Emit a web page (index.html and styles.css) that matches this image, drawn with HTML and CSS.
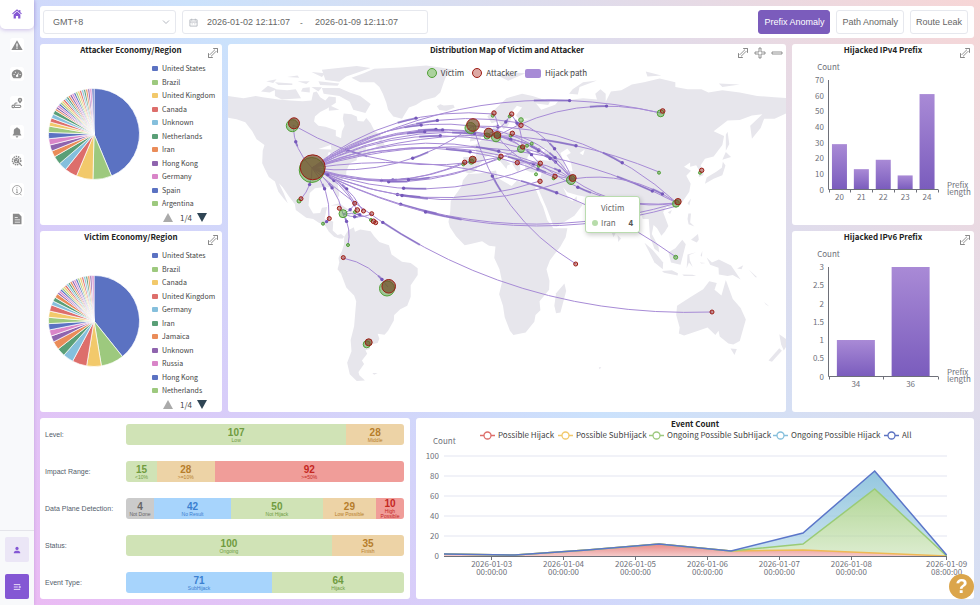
FILE: index.html
```html
<!DOCTYPE html>
<html lang="en">
<head>
    <meta charset="UTF-8">
    <meta name="viewport" content="width=device-width, initial-scale=1.0">
    <title>Prefix Anomaly Dashboard</title>
    <link rel="stylesheet" href="styles.css">
</head>
<body>
    <svg class="defs" aria-hidden="true">
        <symbol id="icon-expand" viewBox="0 0 12 12">
            <path d="M6.5 1.5h4v4l-1.300-1.300-5 5 1.300 1.300h-4v-4l1.300 1.300 5-5z"/>
            <path d="M1.500 6.500v4h4M6.500 1.500h4v4"/>
        </symbol>
    </svg>

    <nav class="sidebar">
        <a class="nav-item active" href="#" aria-label="Home"><svg viewBox="0 0 16 16"><path d="M8 1.500 1.500 7.300l1 1.100L8 3.600l5.500 4.800 1-1.100-2-1.800V2.500h-1.600v1.600z"/><path d="M3.500 8.700 8 4.800l4.500 3.900V14H9.500v-3.500h-3V14h-3z"/></svg></a>
        <a class="nav-item" href="#" aria-label="Alerts"><svg viewBox="0 0 16 16"><path fill-rule="evenodd" d="M8 1.500 15.500 14.500H.5zM7.100 6v4.300h1.800V6zm0 5.300v1.700h1.800v-1.700z"/></svg></a>
        <a class="nav-item" href="#" aria-label="Dashboard"><svg viewBox="0 0 16 16"><path fill-rule="evenodd" d="M8 2a6.500 6.500 0 0 0-5.500 10.500l1 1h9l1-1A6.500 6.500 0 0 0 8 2zM3.500 8h1.300v1.300H3.500zm1.700-3h1.300v1.300H5.200zM11.500 8h1.300v1.300h-1.300zM10.500 5.200 9.300 9.500a1.500 1.500 0 1 1-1.300-.5z"/></svg></a>
        <a class="nav-item" href="#" aria-label="Routes"><svg viewBox="0 0 16 16"><path fill-rule="evenodd" d="M12 1a3 3 0 0 1 3 3c0 1.500-2 3.600-3 4.500C11 7.600 9 5.500 9 4a3 3 0 0 1 3-3zm0 2a1 1 0 1 0 0 2 1 1 0 0 0 0-2z"/><path class="line" d="M8.500 8H6.500a1.500 1.500 0 0 0 0 3h5a1.500 1.500 0 0 1 0 3H5"/><circle class="line" cx="3" cy="12.500" r="1.700"/></svg></a>
        <a class="nav-item" href="#" aria-label="Notifications"><svg viewBox="0 0 16 16"><path d="M8 1.500a1 1 0 0 1 1 1c2 .5 3.300 2 3.300 4.200V10l1.400 2v.7H2.300V12l1.400-2V6.700C3.700 4.500 5 3 7 2.500a1 1 0 0 1 1-1zM6.300 13.500h3.400a1.700 1.700 0 0 1-3.400 0z"/></svg></a>
        <a class="nav-item" href="#" aria-label="Analysis"><svg viewBox="0 0 16 16"><circle class="line dashed" cx="7.500" cy="7.500" r="5.500"/><circle class="line" cx="7.500" cy="7.500" r="2.800"/><path class="line" d="m9.500 9.500 5 5M4 7.500h2l1-1.500 1.500 3 1-1.500"/></svg></a>
        <a class="nav-item" href="#" aria-label="Information"><svg viewBox="0 0 16 16"><circle class="line thin" cx="8" cy="8" r="6"/><path class="line thin" d="M7 7h1v4.300M6.800 11.300h2.500M8 4.300v1.300M11.500 13l2.500 1.500"/></svg></a>
        <a class="nav-item" href="#" aria-label="Reports"><svg viewBox="0 0 16 16"><path fill-rule="evenodd" d="M2.500 1h8L14 4.500V15H2.500zM5 5.500v1.300h4V5.500zm0 3v1.200h7V8.500zm0 3v1.200h7v-1.200z"/></svg></a>
        <div class="sidebar-bottom">
            <button class="side-btn" aria-label="Account"><svg viewBox="0 0 10 10"><circle cx="5" cy="3" r="2"/><path d="M1 9V8c0-1.500 2-2.200 4-2.200S9 6.500 9 8v1z"/></svg></button>
            <button class="side-btn primary" aria-label="Expand menu"><svg viewBox="0 0 10 10"><path class="line" d="M1 2h8M1 5h5M1 8h8M7 5h2.500M8 3.800 9.300 5 8 6.200"/></svg></button>
        </div>
    </nav>

    <main class="page">
        <header class="panel topbar">
            <label class="select-box">
                <select aria-label="Time zone"><option>GMT+8</option><option>GMT+0</option></select>
                <svg viewBox="0 0 8 8"><path d="M1 2.500l3 3 3-3"/></svg>
            </label>
            <div class="date-range">
                <svg viewBox="0 0 10 10"><path d="M1 2h8v7H1zM1 4.500h8M3 .8v2M7 .8v2M3 6.500h1M6 6.500h1"/></svg>
                <input type="text" aria-label="Start time" value="2026-01-02 12:11:07">
                <span>-</span>
                <input type="text" aria-label="End time" value="2026-01-09 12:11:07">
            </div>
            <div class="tabs">
                <button class="tab selected">Prefix Anomaly</button>
                <button class="tab">Path Anomaly</button>
                <button class="tab">Route Leak</button>
            </div>
        </header>

        <section class="panel pie-panel attacker">
            <h2>Attacker Economy/Region</h2>
            <button class="tool expand" aria-label="Expand"><svg><use href="#icon-expand"/></svg></button>
            <div class="pie-body">
                <svg class="pie" id="attackerPie" viewBox="0 0 94 94"></svg>
                <div class="legend">
                    <ul id="attackerLegend"></ul>
                    <div class="pager"><button class="prev" aria-label="Previous"></button><span>1/4</span><button class="next" aria-label="Next"></button></div>
                </div>
            </div>
        </section>

        <section class="panel map-panel">
            <h2>Distribution Map of Victim and Attacker</h2>
            <svg class="map" id="map" viewBox="228 44 558 368" preserveAspectRatio="xMidYMid slice">
                <g id="land" transform="matrix(1.741 0 0 -2.280 478.600 255.600)"></g>
                <g id="paths"></g>
                <g id="nodes"></g>
            </svg>
            <ul class="map-legend">
                <li><i class="dot victim"></i>Victim</li>
                <li><i class="dot attacker-dot"></i>Attacker</li>
                <li><i class="bar"></i>Hijack path</li>
            </ul>
            <div class="tools">
                <button class="tool" aria-label="Expand"><svg><use href="#icon-expand"/></svg></button>
                <button class="tool" aria-label="Zoom in"><svg viewBox="0 0 12 12"><path d="M5 1h2v4h4v2H7v4H5V7H1V5h4z"/></svg></button>
                <button class="tool" aria-label="Zoom out"><svg viewBox="0 0 12 12"><path d="M1 5h10v2H1z"/></svg></button>
            </div>
            <div class="tooltip">
                <div>Victim</div>
                <p><i></i>Iran<b>4</b></p>
            </div>
        </section>

        <section class="panel bar-panel">
            <h2>Hijacked IPv4 Prefix</h2>
            <button class="tool expand" aria-label="Expand"><svg><use href="#icon-expand"/></svg></button>
            <svg class="chart" id="ipv4" viewBox="0 0 182 169"></svg>
        </section>

        <section class="panel pie-panel">
            <h2>Victim Economy/Region</h2>
            <button class="tool expand" aria-label="Expand"><svg><use href="#icon-expand"/></svg></button>
            <div class="pie-body">
                <svg class="pie" id="victimPie" viewBox="0 0 94 94"></svg>
                <div class="legend">
                    <ul id="victimLegend"></ul>
                    <div class="pager"><button class="prev" aria-label="Previous"></button><span>1/4</span><button class="next" aria-label="Next"></button></div>
                </div>
            </div>
        </section>

        <section class="panel bar-panel">
            <h2>Hijacked IPv6 Prefix</h2>
            <button class="tool expand" aria-label="Expand"><svg><use href="#icon-expand"/></svg></button>
            <svg class="chart" id="ipv6" viewBox="0 0 182 169"></svg>
        </section>

        <div class="bottom">
            <section class="panel stats" id="stats"></section>
            <section class="panel count-panel">
                <h2>Event Count</h2>
                <svg class="chart" id="count" viewBox="416 430 558 169"></svg>
            </section>
        </div>
    </main>
    <button class="help" aria-label="Help">?</button>
    <script src="app.js"></script>
</body>
</html>
```
FILE: styles.css
```css
* { box-sizing: border-box; }
body { margin: 0; display: flex; min-height: 100vh; font-family: "Noto Sans CJK SC", "Noto Sans", sans-serif; font-size: 8px; color: #333; background: linear-gradient(45deg, #ecb9f3 0%, #d8cdf9 27%, #cbe2fc 50%, #dfdcec 74%, #f7d6d6 100%); }
button, input, select { font-family: "Liberation Sans", Arial, sans-serif; font-size: 9px; margin: 0; padding: 0; border: none; background: none; color: #666; }
button { cursor: pointer; }
ul { list-style: none; margin: 0; padding: 0; }
svg { display: block; }
.defs { position: absolute; width: 0; height: 0; }

.sidebar { width: 34px; flex: none; background: #f8f9fb; display: flex; flex-direction: column; align-items: center; gap: 15px; box-shadow: 0 0 3px rgba(120, 100, 160, .3); }
.nav-item { width: 14px; height: 14px; padding: 1px; background: #fff; border-radius: 3px; flex: none; }
.nav-item svg { width: 12px; height: 12px; fill: #8b8b8b; }
.nav-item.active { width: 34px; height: 29px; margin-bottom: -6px; padding: 8px 11px; border-radius: 0 0 5px 5px; box-shadow: 0 1px 4px rgba(120, 80, 200, .35); }
.nav-item.active svg { fill: #8457d4; }
.sidebar .line { fill: none; stroke: #8b8b8b; stroke-width: 1.500; }
.sidebar .thin { stroke-width: 1; }
.sidebar .dashed { stroke-dasharray: 2 1; stroke-width: 2; }
.sidebar-bottom { margin-top: auto; width: 100%; padding: 6px 5px; display: flex; flex-direction: column; align-items: center; gap: 12px; border-top: 1px solid #e4e4ea; }
.side-btn { width: 24px; height: 25px; border-radius: 2px; background: #ebe6f6; display: flex; align-items: center; justify-content: center; }
.side-btn svg { width: 8px; height: 8px; fill: #8457d4; }
.side-btn.primary { background: #8457d4; }
.side-btn.primary .line { stroke: #fff; stroke-width: 1; }

.page { flex: 1; min-width: 0; padding: 6px; display: grid; gap: 6px; grid-template-columns: 182px minmax(0, 1fr) 182px; grid-template-rows: 32px repeat(3, minmax(181px, 1fr)); }
.panel { background: #fff; border-radius: 3px; position: relative; min-width: 0; }
.panel h2 { margin: 0; font-size: 8px; line-height: 12px; font-weight: bold; text-align: center; color: #222; }
.topbar { grid-column: 1 / -1; display: flex; align-items: center; gap: 6px; padding: 0 6px 0 3px; }
.select-box { position: relative; width: 133px; }
.select-box select { width: 100%; height: 24px; padding: 0 9px; border: 1px solid #e6e8ee; border-radius: 3px; appearance: none; background: #fff; }
.select-box svg { position: absolute; right: 6px; top: 8px; width: 8px; height: 8px; fill: none; stroke: #b4b8c0; }
.date-range { width: 246px; height: 24px; padding: 0 6px; display: flex; align-items: center; border: 1px solid #e6e8ee; border-radius: 3px; color: #444; }
.date-range svg { width: 9px; height: 9px; fill: none; stroke: #b4b8c0; }
.date-range input { width: 99px; padding-left: 9px; }
.date-range span { width: 9px; text-align: center; }
.tabs { margin-left: auto; display: flex; gap: 6px; }
.tab { height: 24px; padding: 0 5px; border: 1px solid #e6e8ee; border-radius: 3px; }
.tab.selected { background: #7b5cbc; border-color: #7b5cbc; color: #fff; }

.tool { width: 12px; height: 12px; }
.tool svg { width: 12px; height: 12px; fill: #fff; stroke: #777; stroke-width: .800; }
.expand { position: absolute; top: 3px; right: 3px; }

.pie-panel, .bar-panel, .count-panel { display: flex; flex-direction: column; }
.pie-body { flex: 1; display: flex; justify-content: space-between; padding-left: 7px; }
.pie { width: 94px; height: 94px; margin-top: 31px; }
.pie path { stroke: #fff; stroke-width: .700; }
.legend { width: 70px; padding: 6px 0 1px; display: flex; flex-direction: column; }
.legend ul { flex: 1; display: flex; flex-direction: column; justify-content: space-between; }
.legend li { display: flex; align-items: center; gap: 4px; font-size: 7px; line-height: 13px; color: #444; }
.legend li i { width: 6px; height: 5px; border-radius: 1px; }
.pager { height: 14px; padding-left: 11px; display: flex; align-items: center; gap: 7px; color: #444; }
.prev, .next { width: 0; height: 0; border-left: 5px solid transparent; border-right: 5px solid transparent; }
.prev { border-bottom: 9px solid #aaa; }
.next { border-top: 9px solid #2f4554; }
.pager .next { margin-left: -2px; }

.map-panel { grid-column: 2; grid-row: 2 / 4; overflow: hidden; }
.map-panel h2 { position: relative; z-index: 1; }
.map { position: absolute; inset: 0; width: 100%; height: 100%; }
#land path { fill: #e7e6ec; }
#land .water { fill: #fff; }
.route { fill: none; stroke: #a78bd6; stroke-width: 1; }
.trail { fill: none; stroke: #7d62c0; stroke-width: 2; stroke-linejoin: round; opacity: .65; }
.head { fill: #7558ba; }
.node-v { fill: #55a53c; fill-opacity: .5; stroke: #50a035; }
.node-a { fill: #a0281e; fill-opacity: .45; stroke: #9c1c14; }
.node-a.dense { fill: #744c28; fill-opacity: .7; }
.map-legend { position: absolute; top: 23px; left: 0; right: 0; display: flex; justify-content: center; gap: 8px; line-height: 12px; color: #444; }
.map-legend li { display: flex; align-items: center; gap: 4px; }
.dot { width: 10px; height: 10px; border-radius: 50%; border: 1px solid #50a035; background: #abd29d; }
.attacker-dot { border-color: #9c1c14; background: #dda9a4; }
.bar { width: 16px; height: 9px; border-radius: 2px; background: #a78bd6; }
.tools { position: absolute; top: 3px; right: 3px; display: flex; gap: 5px; }
.tooltip { position: absolute; left: 64%; top: 152px; width: 55px; height: 37px; padding: 5px 6px; background: #fff; border: 1px solid #b9dcae; border-radius: 3px; box-shadow: 1px 2px 5px rgba(0, 0, 0, .2); text-align: center; line-height: 12px; color: #666; }
.tooltip p { margin: 3px 0 0; display: flex; align-items: center; gap: 3px; }
.tooltip i { width: 6px; height: 6px; border-radius: 50%; background: #b7dcaa; }
.tooltip b { margin-left: auto; color: #555; }

.chart { width: 100%; flex: 1; min-height: 0; }
.chart text { font-size: 8px; fill: #6e7079; }
.chart .axis { fill: none; stroke: #6e7079; stroke-width: 1; }
.chart .grid { stroke: #f1f2f8; stroke-width: 2; }
.chart .legend-text { fill: #444; }

.bottom { grid-column: 1 / -1; display: grid; grid-template-columns: 185fr 279fr; gap: 6px; }
.stats { padding: 6px 6px 6px 5px; display: flex; flex-direction: column; justify-content: space-between; font-family: "Liberation Sans", Arial, sans-serif; }
.stat-row { display: flex; align-items: center; font-size: 7px; color: #525c6b; }
.stat-row > span { width: 81px; flex: none; }
.stat-bar { flex: 1; min-height: 21px; display: flex; border-radius: 3px; overflow: hidden; }
.seg { min-width: 28px; flex-basis: 0; display: flex; flex-direction: column; justify-content: center; text-align: center; font-size: 5px; line-height: 5px; }
.seg b { font-size: 10px; line-height: 11px; }
.green { background: #d0e3b6; color: #6f9b3f; }
.orange { background: #edd3a6; color: #b67d2b; }
.red { background: #f09d99; color: #c4271f; }
.blue { background: #a7d4fc; color: #3b7fd0; }
.gray { background: #cbcbcb; color: #666; }

.help { position: fixed; right: 6px; bottom: 6px; width: 25px; height: 25px; border-radius: 50%; background: #dba54b; color: #fff; font-size: 20px; font-weight: bold; line-height: 25px; }
```
FILE: app.js
```js
const colors = ["#5b72c2", "#9dc97e", "#f2c96b", "#dd6e6b", "#85bfdc", "#5a9f77", "#ea8c59", "#8f64ae", "#d985c8"];
const byId = id => document.getElementById(id);
const ones = n => Array(n).fill(1);

function drawPie(name, counts, labels) {
    const total = counts.reduce((a, b) => a + b, 0);
    let sum = 0;
    byId(name + "Pie").innerHTML = counts.map((n, i) => {
        const a = sum / total * 2 * Math.PI;
        sum += n;
        const b = sum / total * 2 * Math.PI;
        const point = t => `${47 + 45.5 * Math.sin(t)} ${47 - 45.5 * Math.cos(t)}`;
        return `<path fill="${colors[i % 9]}" d="M47 47L${point(a)}A45.5 45.5 0 ${b - a > Math.PI ? 1 : 0} 1 ${point(b)}z"/>`;
    }).join('');
    byId(name + "Legend").innerHTML = labels.map((l, i) => `<li><i style="background:${colors[i % 9]}"></i>${l}</li>`).join('');
}

drawPie("attacker", [59, 9, 8, 6, 4, 4, 3, 3, 3, 3, 3, 2, 2, 2, 2, ...ones(22)],
    ["United States", "Brazil", "United Kingdom", "Canada", "Unknown", "Netherlands", "Iran", "Hong Kong", "Germany", "Spain", "Argentina"]);
drawPie("victim", [53, 11, 7, 7, 5, 4, 4, 3, 3, 3, 3, 3, 3, 2, 2, 2, ...ones(20)],
    ["United States", "Brazil", "Canada", "United Kingdom", "Germany", "Iran", "Jamaica", "Unknown", "Russia", "Hong Kong", "Netherlands"]);

// bar charts
function drawBars(id, data, ticks, barWidth) {
    const left = 36.5, right = 146, top = 24, bottom = 133.5;
    const max = ticks[ticks.length - 1];
    const step = (right - left) / data.length;
    let out = `<defs><linearGradient id="g-${id}" x1="0" y1="0" x2="0" y2="1"><stop offset="0" stop-color="#a98ad6"/><stop offset="1" stop-color="#7a5cbd"/></linearGradient></defs>`;
    out += `<text x="36.5" y="14" text-anchor="middle">Count</text>`;
    ticks.forEach(t => {
        out += `<text x="32" y="${bottom + 3 - t / max * (bottom - top)}" text-anchor="end">${t}</text>`;
    });
    data.forEach(([label, n], i) => {
        const x = left + step * (i + .5), h = n / max * (bottom - top);
        out += `<rect x="${x - barWidth / 2}" y="${bottom - h}" width="${barWidth}" height="${h}" fill="url(#g-${id})"/>`;
        out += `<text x="${x}" y="144" text-anchor="middle">${label}</text>`;
    });
    let d = `M${left} ${top}V${bottom}H${right}`;
    for (let i = 0; i <= data.length; i++) d += `M${Math.round(left + step * i) + .5} ${bottom}v3`;
    out += `<path class="axis" d="${d}"/><text x="155" y="132">Prefix</text><text x="155" y="139">length</text>`;
    byId(id).innerHTML = out;
}
drawBars("ipv4", [[20, 29], [21, 13], [22, 19], [23, 9], [24, 61]], [0, 10, 20, 30, 40, 50, 60, 70], 15);
drawBars("ipv6", [[34, 1], [36, 3]], [0, 0.5, 1, 1.5, 2, 2.5, 3], 38);

// stacked counters
const stats = [
    ["Level:", [[107, "Low", "green"], [28, "Middle", "orange"]]],
    ["Impact Range:", [[15, "&lt;10%", "green"], [28, "&gt;=10%", "orange"], [92, "&gt;=50%", "red"]]],
    ["Data Plane Detection:", [[4, "Not Done", "gray"], [42, "No Result", "blue"], [50, "Not Hijack", "green"], [29, "Low Possible", "orange"], [10, "High<br>Possible", "red"]]],
    ["Status:", [[100, "Ongoing", "green"], [35, "Finish", "orange"]]],
    ["Event Type:", [[71, "SubHijack", "blue"], [64, "Hijack", "green"]]]
];
byId("stats").innerHTML = stats.map(([label, segs]) => `<div class="stat-row"><span>${label}</span><div class="stat-bar">${
    segs.map(([n, text, color]) => `<div class="seg ${color}" style="flex-grow:${n}"><b>${n}</b><span>${text}</span></div>`).join('')
}</div></div>`).join('');

// event count
function drawCount() {
    const xs = [444, 515, 587, 659, 731, 803, 874.7, 946.6];
    const all = [2, 1, 6, 12, 5, 23, 85, 1];
    const ongoing = [2, 1, 6, 12, 5, 12, 67, 0];
    const sub = [2, 1, 6, 12, 5, 6, 3, 0];
    const line = v => v.map((n, i) => `${xs[i]} ${556 - n}`).join('L');
    const band = (up, low) => "M" + line(up) + "L" + low.map((n, i) => `${xs[i]} ${556 - n}`).reverse().join('L') + "z";
    const zero = xs.map(() => 0);
    let out = '<defs>' + [["r", "#e88986"], ["g", "#b2d696"], ["b", "#93c6df"]].map(([k, c]) =>
        `<linearGradient id="area-${k}" x1="0" y1="0" x2="0" y2="1"><stop offset="0" stop-color="${c}"/><stop offset="1" stop-color="${c}" stop-opacity=".45"/></linearGradient>`).join('') + '</defs>';
    [20, 40, 60, 80, 100].forEach(t => out += `<path class="grid" d="M444 ${556 - t}H947"/>`);
    [0, 20, 40, 60, 80, 100].forEach(t => out += `<text x="439" y="${559 - t}" text-anchor="end">${t}</text>`);
    out += `<path d="${band(all, ongoing)}" fill="url(#area-b)"/><path d="${band(ongoing, sub)}" fill="url(#area-g)"/><path d="${band(sub, zero)}" fill="url(#area-r)"/>`;
    [[sub, "#efb954"], [ongoing, "#9acb76"], [all, "#5b76c9"]].forEach(([v, c]) => out += `<path fill="none" stroke-width="1.5" stroke="${c}" d="M${line(v)}"/>`);
    out += '<path class="axis" d="M444 556.5H947"/>';
    [[491.7, "2026-01-03"], [563.5, "2026-01-04"], [635.5, "2026-01-05"], [707.5, "2026-01-06"], [779.3, "2026-01-07"], [851.3, "2026-01-08"], [946.6, "2026-01-09"]].forEach(([x, day], i) => {
        out += `<path class="axis" d="M${Math.floor(x) + .5} 557v3"/><text x="${x}" y="567" text-anchor="middle">${day}</text><text x="${x}" y="575" text-anchor="middle">${i == 6 ? "08" : "00"}:00:00</text>`;
    });
    out += '<text x="433" y="444">Count</text>';
    [[480, "Possible Hijack", "#dd6e6b"], [558, "Possible SubHijack", "#f2c96b"], [649, "Ongoing Possible SubHijack", "#9dc97e"], [773, "Ongoing Possible Hijack", "#85bfdc"], [884, "All", "#5b72c2"]].forEach(([x, text, c]) => {
        out += `<path d="M${x} 435.5h15" stroke="${c}" stroke-width="1.5"/><circle cx="${x + 7.5}" cy="435.5" r="3.5" fill="#fff" stroke="${c}" stroke-width="1.3"/><text class="legend-text" x="${x + 18}" y="438">${text}</text>`;
    });
    byId("count").innerHTML = out;
}
drawCount();

// coastlines, longitude,latitude
const land = [
    "-168,66 -162,66 -157,71 -150,70.5 -141,69.7 -135,69 -128,70 -124,69.5 -115,68.5 -108,68 -101,67.7 -96,68 -95,71.5 -93,72 -91,69.5 -88,68 -86,69.8 -82,69.5 -82,67 -87,64.5 -91,63 -94,61 -94.5,58.8 -92,57 -88,56.5 -82,55 -82,52.5 -79,51.5 -78.5,54.5 -77,57 -78,60 -77.5,62.3 -73,62 -70,61 -69.5,59 -66,58.8 -64.5,60.3 -62,58 -60,55 -56,52.5 -60,50.2 -66,50 -70,47 -65,48.8 -64.5,46.5 -60,46 -66,43.8 -70,43.5 -70,41.8 -74,40.5 -76,37 -76,35 -81,31.5 -80,26.5 -81,25.2 -82.8,28 -84,30 -89.5,30 -94,29.5 -97,27.5 -97.7,22 -95,18.5 -91,18.7 -90,21 -87,21.3 -88.5,16 -83.5,15 -83.8,11 -81,9 -79,9.5 -77.2,8.3 -78,7.5 -80,7.5 -83,8.3 -86,10.5 -88,13 -92,14.5 -95,16 -99,16.6 -105,20 -105.5,22.5 -109,26 -112.5,30 -114.7,31.7 -112,27.5 -109.6,23 -112,25 -115,28 -117,32.5 -120.5,34.5 -122.5,37.5 -124.3,40.5 -124,46 -123,48.5 -127.5,51 -130,54.5 -134,58.5 -139,59.8 -146,60.8 -152,59 -158,57 -165,60",
    "-73,78 -68,76 -60,76 -57,74 -55,71 -53,67 -52,64 -49,61 -44,60 -42,62.5 -40,65 -36,66 -32,68 -25,69.5 -22,71.5 -20,76 -18,80 -14,81.5 -22,82.5 -30,83.4 -45,82.5 -60,82 -66,80",
    "-24,65.5 -22,66.4 -20,65.8 -14.5,66.2 -13.7,65 -18.5,63.4 -22.5,63.9",
    "-77.2,8.3 -75,11 -71.7,12.4 -71,10.5 -68,11.5 -62,10.7 -60,8.5 -57,6 -51.5,4.5 -50,.5 -44,-2.7 -39,-3.2 -35,-5.5 -35,-8.5 -39,-13 -39,-18 -41,-22 -45,-23.5 -48.5,-26 -48.7,-28.5 -52,-33 -54,-34.7 -58,-34.3 -57,-36.5 -58,-38.3 -62,-39 -62.5,-41 -65,-41.5 -64,-43 -67,-46 -65.8,-47.5 -69,-51 -68.5,-52.5 -65.3,-54.8 -70,-55 -74,-52 -75.5,-47 -73,-42 -73.5,-37 -71.5,-31 -70.3,-20 -71.5,-17.5 -76,-14 -79,-8 -81,-6 -80,-3 -80.5,-1 -78.5,2 -77.3,5",
    "-6,35.8 0,36 10,37.3 11,34 15,32.3 19,30.5 22,32.8 29,31 34,31 32.5,29.8 35.5,24 37,21.5 39.5,15.5 43,12 51,12 50,8 47,4 41,-2 39,-6 40.7,-11 40.5,-15 35,-20 35.5,-24 32.7,-26 32,-29 27,-33.7 20,-34.8 18,-33 15,-27 14,-22 11.8,-17 13.5,-11.5 12,-6 9,-1 9.7,4 6,4.3 2,6.3 -4,5.2 -8,4.5 -13,8.5 -16.5,12.5 -17.3,14.7 -16.3,19.5 -16,24 -12,28 -9.7,30.5 -9,33",
    "49.3,-12.2 50.3,-15.5 47,-25 44.5,-25.3 43.5,-22 44.5,-16.5",
    "-9,37 -9.3,39 -8.8,43.3 -1.7,43.4 -1.2,46 -4.5,48.4 -1.5,48.7 1.5,50.5 4,52 8,53.6 8.2,57 10.5,57.5 10,54.5 14,54 19,54.5 21.3,57 24,57.2 24,59.3 30,60 23,60 21.4,61.5 25,65 22,65.7 17.3,61.5 18.7,59.8 16.5,56.5 14.3,55.4 11.3,59 7.5,58 5,61 12,66 16,69 25,71 31,70 41,67.5 40,66 33,66.7 36,64 38,64.5 44,66.2 46,68 54,68.5 60,69 68,68.5 67,71 70,73 73,71 73,67.5 76,72 82,72.5 88,75 95,76 104,77.7 113,76 113,74 120,73 128,73 132,71.5 140,72.5 150,71.5 160,70 170,69.5 180,69 180,65 177,62.5 170,60 164,60 162,56 157,51.3 156,57 163,62 157,61.5 150,59.5 143,59.3 135,54.5 141,52.5 140,48.5 135,43.5 130,42.5 127.5,39.5 129.3,37 129,35.2 126.5,34.5 126.5,37.5 125,39.6 121.5,39 121.5,40.8 118,39 122,37.2 119.3,35 121.8,31.5 121,28 117,23.5 110.5,21 108,21.5 106,19 109,13 107,10.5 105,8.7 102.5,12 100.5,13.4 99.5,9.5 103.3,4 103.8,1.4 101,3 98.5,8 97.7,16 94.3,16 92,21.5 88,21.7 80.3,15.5 80,12 77.5,8 74,15 72.7,20.5 69,22 66.5,25 57,26.5 51,27.8 48.5,30 51.5,25 54,24 56.3,26 56.5,24 59.8,22.3 55,17.5 45,12.8 43,13 39,21 35,28 34.3,31 36,35.5 36.2,36.8 30.5,36.5 27,37.5 26.5,40 29,41.2 35,42 41.5,41.5 37,44.8 39,47.2 35,46.3 36,45.2 33.5,44.5 32,46.5 30,45.8 28,43 28,41 23.5,40.5 24,38 22.5,36.6 19.5,40 19.5,42 13.5,45.6 12.4,44.5 14,42.5 18.4,40.2 16.5,39.5 16,38 12.5,41.3 9,44.3 4,43.4 3,42 -.3,39.5 -2,36.8 -5.5,36",
    "-5,50 1.3,51 1.5,52.7 -2,55.5 -2,57.5 -5,58.6 -5.5,56 -3,54 -4.5,52", "-10,52 -6.3,52.3 -6,55 -9.5,54",
    "130,31.5 135,33.7 140,35.2 141.8,39.5 140.3,41.2 139.7,38.5 136.5,36.8 131,34.3", "140,42 145,43.3 142,45.4", "142,46 144,49 143,54.3 142,53",
    "120,23 121,22 122,25", "108.7,19 110,18.3 111,20", "120,16 120.5,18.5 122,18.5 121.5,14.5 124,12.8 120.6,13.8", "122,7 126,9.5 126.5,7 125.3,5.7", "79.8,9 81.8,7.5 80.2,6",
    "109,1.5 113,3.2 117,7 119,5 117.5,.5 116,-4 110.5,-3", "95.3,5.6 100,2.5 106,-3 105.8,-6 101,-3", "105.3,-6.7 111,-6.4 114.5,-7.7 114.3,-8.7 106.5,-7.5",
    "119.5,-5.5 120,.5 125,1.5 121,.3 121.3,-2 123,-5 120.8,-3", "117,-8.3 123,-8.4 125,-9 118,-9", "127.5,0 128.5,2 128.3,-.5", "127,-3 130.5,-3.3 128,-3.5",
    "131,-.8 134,-3 138,-1.7 145,-4.3 150.5,-10.5 146,-8.5 143,-9 138,-8.3 137.8,-5.3 133,-4", "148.5,-5.7 152,-4.2 151,-6", "155,-6 160,-9.5 159,-9.5", "164,-20.3 167,-22.3 165,-21.5",
    "114,-22 122,-18 129,-14.8 132.5,-11.3 136.8,-12 135.5,-15 139.5,-17.5 142,-10.7 146,-19 150.5,-23 153.5,-28 150,-37.5 146.3,-39 143.5,-38.5 138.5,-35.5 137.8,-33 136,-34.8 131.5,-31.5 124,-33.5 118,-35 115,-34.2 115.5,-31.5 113.5,-26",
    "144.7,-40.8 148.3,-41 147,-43.6", "172.7,-34.5 178.5,-37.7 175.3,-41.6 173.8,-39", "172.7,-40.6 174.2,-41.7 168.5,-46.6 166.5,-46",
    "11,79 20,80.3 27,80 17,76.7", "52,71 57,70.7 58,74 68,76.8 60,76 54,73", "96,80.8 105,79 97,78.5", "138,75.5 150,75 140,74", "46,80.5 62,81.3 55,80",
    "-85,22 -80,23 -74.5,20 -78,20 -80,22", "-74,18.5 -73,19.9 -68.5,18.6", "-59,48 -56,51.5 -53,47", "-61,-51.5 -58,-51.5 -60,-52.3", "69,-49 70.5,-49 69.5,-49.8",
    "-125,72 -121,74.5 -116,73 -120,71.5", "-117,70 -117,73 -110,72.5 -105,73 -102,69 -113,68.5", "-90,73.5 -80,73.5 -74,71.5 -68,70 -62,66.5 -65,62.5 -72,64 -74,67.5 -80,70 -89,71",
    "-92,76.5 -80,75.5 -81,74.5 -91,74.8", "-90,81.5 -70,83.2 -62,82.3 -76,78.5 -80,76.2 -88,77", "-117,76 -107,75.5 -107,74.8 -115,74.8", "-96,74 -90,73.8 -92,72", "-96,80.5 -88,80 -90,78.3", "-86,66 -80,64 -86,63.5", "-101,73.5 -97,73.8 -97,71.5 -102,72", "-104,76.5 -97,76.5 -99,75.3", "-122,76.5 -116,77.3 -118,75.7", "-110,78.3 -104,79 -103,78"
];
const water = ["47,45 51,47 53,45 50.5,44 53,41 54,37 50,37.5 49,41", "58,45 61,46.5 60,44", "-92,46.7 -85,48.5 -84.5,46.5", "-87.5,42 -86,45.5 -85,45 -86,42", "-84,45.5 -80,45 -82,43", "-83,41.7 -79,43 -80,42.2", "-79,43.5 -76.3,44 -77,43.3"];
byId("land").innerHTML = land.map(p => `<path d="M${p}z"/>`).join('') + water.map(p => `<path class="water" d="M${p}z"/>`).join('');

// hijack paths: from, to, position of the moving head
const us = [312, 168], ca = [293, 125], uk = [473, 126], nl = [488, 134], de = [497, 136], br = [388, 287], ir = [572, 179], hk = [677, 203], ru = [661, 113];
const es = [472, 160], pt = [465, 162], it = [501, 157], ro = [522, 148], tr = [540, 164], eg = [540, 181], fi = [521, 123], pl = [512, 134], se = [511, 114], no = [494, 114], gr = [517, 163], iq = [554, 177], ua = [531, 144];
const routes = [
    [[712, 312], us, .8], [us, ru, .75], [de, ru, .68], [[576, 264], uk, .7], [[343, 258], br, .83], [us, ca, .65], [it, ca, .73],
    [us, uk, .7], [us, nl, .72], [us, de, .72], [us, [487, 137], .66], [us, no, .6], [us, fi, .62], [us, ro, .62], [us, ua, .75], [us, [659, 172], .76], [us, hk, .93], [us, [676, 257], .65],
    [us, ir, .85], [us, tr, .82], [us, iq, .65], [uk, us, .4], [es, us, .5], [pt, us, .55], [it, us, .6], [ro, us, .55], [tr, us, .6], [eg, us, .62], [ir, us, .65], [hk, us, .75], [[677, 206], us, .68],
    [de, ir, .5], [nl, ir, .55], [ir, de, .4], [fi, ir, .55], [uk, ir, .8], [pl, ir, .65], [ro, ir, .5], [gr, ir, .75], [se, ro, .3], [no, de, .6], [se, nl, .3], [de, ro, .5], [ir, hk, .85], [hk, ir, .5], [hk, tr, .7], [uk, hk, .7], [nl, tr, .8],
    [us, [301, 199], .5], [us, [329, 218], .45], [us, [343, 214], .5], [us, [357, 210], .4], [us, [363, 211], .6], [us, [355, 203], .3],
    [[343, 214], [375, 222], .5], [[372, 214], [343, 214], .6], [[329, 218], [323, 224], .5], [[343, 214], [348, 245], .25], [[355, 203], [343, 214], .5]
];
const at = (a, c, b, t) => [0, 1].map(i => (1 - t) * (1 - t) * a[i] + 2 * t * (1 - t) * c[i] + t * t * b[i]);
byId("paths").innerHTML = routes.map(([a, b, t]) => {
    const c = [(a[0] + b[0]) / 2 - (a[1] - b[1]) * .2, (a[1] + b[1]) / 2 - (b[0] - a[0]) * .2];
    const head = at(a, c, b, t), mid = at(a, c, b, t - .05), tail = at(a, c, b, t - .1);
    return `<path class="route" d="M${a}Q${c} ${b}"/><path class="trail" d="M${tail}L${mid}L${head}"/><circle class="head" cx="${head[0]}" cy="${head[1]}" r="1.7"/>`;
}).join('');

const victims = [[292.3, 125.7, 6], [311.7, 170, 12.5], [299, 201, 2], [323, 223.7, 1.5], [343, 213.7, 4], [355, 212, 1.5], [371, 220, 1.5], [348, 245, 1.5], [387, 288.5, 7.5], [366.7, 344.3, 3.5], [470.5, 128, 5.5], [487, 136, 3], [496, 137.3, 4.5], [492.7, 115.7, 1.5], [509.7, 116.3, 1.5], [521, 120, 2.3], [510.7, 135.7, 1.5], [521, 149, 3.5], [527, 145.7, 1.5], [531.7, 143.7, 1.5], [499.3, 158.7, 1.5], [471.3, 161.7, 2.5], [463.3, 164.3, 1.5], [538.7, 165.7, 1.5], [536, 174.3, 1.5], [553.7, 178.3, 1.5], [571, 180, 4.5], [660.7, 113.3, 3.5], [659, 172.7, 1.5], [700, 172.7, 1.5], [676, 203.7, 3.5], [675.7, 257.3, 2]];
const attackers = [[294, 123.3, 5.5], [312.7, 167.3, 12.5], [301, 198.7, 2], [329.3, 218.5, 2], [339.3, 208.3, 2], [354.7, 203.3, 2], [357.3, 210, 2.3], [363.5, 211, 2], [371.7, 213.7, 2], [373.5, 221.3, 2.3], [375.7, 222.7, 2], [343.3, 257.6, 2], [388.7, 286.3, 6.8], [368.7, 342.3, 3.5], [473, 125, 6.3], [488.7, 132.7, 4.5], [497.3, 135, 3.5], [494, 113, 2.2], [511.7, 114, 2.2], [521, 125.3, 2.2], [512.3, 133.3, 2.2], [522.7, 147, 2.2], [501, 156.3, 2.2], [472.7, 159.7, 3.5], [464.7, 162.3, 2.2], [517.3, 162.7, 2.2], [540.3, 163.3, 2.2], [540, 181.3, 2.2], [555, 176.3, 2.2], [572.7, 178, 3.5], [662.7, 111, 2.3], [701.7, 170.3, 2.2], [678, 201.7, 3.2], [575.7, 264, 2], [712, 312, 2]];
const circle = (cls, [x, y, r]) => `<circle class="${cls}" cx="${x}" cy="${y}" r="${r}"/>`;
byId("nodes").innerHTML = victims.map(v => circle("node-v", v)).join('') + attackers.map(a => circle(a[2] > 3 ? "node-a dense" : "node-a", a)).join('');
```
